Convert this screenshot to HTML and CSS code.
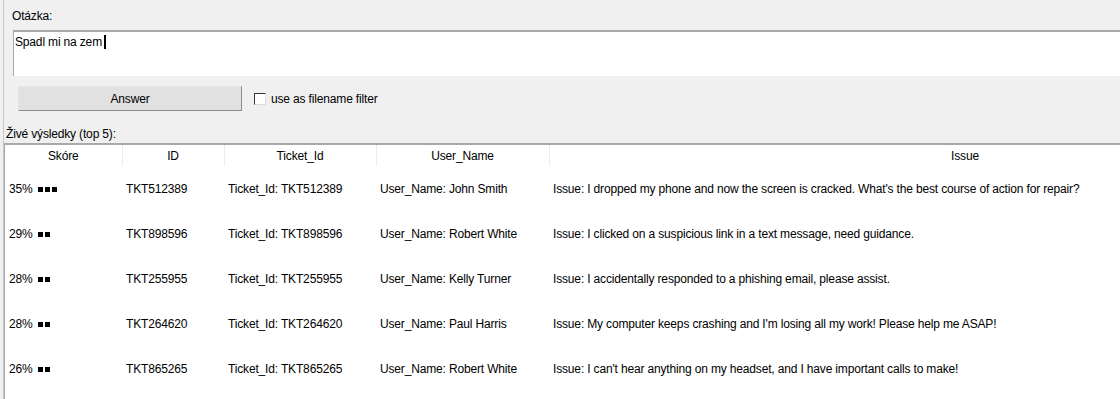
FILE: index.html
```html
<!DOCTYPE html>
<html lang="cs">
<head>
    <meta charset="UTF-8">
    <title>Otázka</title>
    <link rel="stylesheet" href="styles.css">
</head>
<body>
    <div class="frame">
        <div class="label question-label">Otázka:</div>
        <div class="query-box">
            <span class="query-text">Spadl mi na zem</span><span class="caret"></span>
        </div>

        <div class="actions">
            <button class="answer-btn">Answer</button>
            <label class="filter">
                <span class="check"></span>
                use as filename filter
            </label>
        </div>

        <div class="label results-label">Živé výsledky (top 5):</div>

        <div class="results">
            <table>
                <colgroup>
                    <col class="c-score">
                    <col class="c-id">
                    <col class="c-ticket">
                    <col class="c-user">
                    <col class="c-issue">
                </colgroup>
                <thead>
                    <tr>
                        <th>Skóre</th>
                        <th>ID</th>
                        <th>Ticket_Id</th>
                        <th>User_Name</th>
                        <th>Issue</th>
                    </tr>
                </thead>
                <tbody>
                    <tr>
                        <td>35% <span class="bar"><i></i><i></i><i></i></span></td>
                        <td>TKT512389</td>
                        <td>Ticket_Id: TKT512389</td>
                        <td>User_Name: John Smith</td>
                        <td>Issue: I dropped my phone and now the screen is cracked. What's the best course of action for repair?</td>
                    </tr>
                    <tr>
                        <td>29% <span class="bar"><i></i><i></i></span></td>
                        <td>TKT898596</td>
                        <td>Ticket_Id: TKT898596</td>
                        <td>User_Name: Robert White</td>
                        <td>Issue: I clicked on a suspicious link in a text message, need guidance.</td>
                    </tr>
                    <tr>
                        <td>28% <span class="bar"><i></i><i></i></span></td>
                        <td>TKT255955</td>
                        <td>Ticket_Id: TKT255955</td>
                        <td>User_Name: Kelly Turner</td>
                        <td>Issue: I accidentally responded to a phishing email, please assist.</td>
                    </tr>
                    <tr>
                        <td>28% <span class="bar"><i></i><i></i></span></td>
                        <td>TKT264620</td>
                        <td>Ticket_Id: TKT264620</td>
                        <td>User_Name: Paul Harris</td>
                        <td>Issue: My computer keeps crashing and I'm losing all my work! Please help me ASAP!</td>
                    </tr>
                    <tr>
                        <td>26% <span class="bar"><i></i><i></i></span></td>
                        <td>TKT865265</td>
                        <td>Ticket_Id: TKT865265</td>
                        <td>User_Name: Robert White</td>
                        <td>Issue: I can't hear anything on my headset, and I have important calls to make!</td>
                    </tr>
                </tbody>
            </table>
        </div>
    </div>
</body>
</html>
```

FILE: styles.css
```css
* {
    box-sizing: border-box;
}

html, body {
    margin: 0;
    height: 100%;
    overflow: hidden;
}

body {
    background: #f0f0f0;
    font-family: "Liberation Sans", Arial, sans-serif;
    font-size: 12px;
    letter-spacing: -0.16px;
    color: #000000;
}

.frame {
    margin-left: 3px;
    height: 399px;
    border-left: 1px solid #c8c8c8;
}

.label {
    line-height: 14px;
}

.question-label {
    padding: 9px 0 0 8px;
    height: 30px;
}

.query-box {
    margin-left: 9px;
    height: 46px;
    background: #ffffff;
    border-top: 2px solid #a9a9a9;
    border-left: 1px solid #a9a9a9;
    padding: 3px 0 0 1px;
    line-height: 14px;
}

.caret {
    display: inline-block;
    width: 2px;
    height: 14px;
    background: #000000;
    vertical-align: -3px;
    margin-left: 2px;
}

.actions {
    display: flex;
    align-items: flex-start;
    gap: 12px;
    padding: 10px 0 0 14px;
    height: 50px;
}

.answer-btn {
    width: 224px;
    height: 25px;
    background: #e1e1e1;
    border: 1px solid #e6e6e6;
    border-right: 1px solid #8c8c8c;
    border-bottom: 1px solid #8c8c8c;
    font-family: inherit;
    font-size: 12px;
    letter-spacing: inherit;
    color: #000000;
    padding: 0;
}

.filter {
    display: flex;
    align-items: center;
    gap: 5px;
    margin-top: 6px;
    line-height: 14px;
}

.check {
    width: 12px;
    height: 12px;
    background: #ffffff;
    border: 1px solid #333333;
    border-right-color: #dcdcdc;
    border-bottom-color: #dcdcdc;
}

.results-label {
    padding: 1px 0 0 2px;
    height: 17px;
}

.results {
    height: 256px;
    background: #ffffff;
    border-top: 2px solid #a9a9a9;
    border-left: 1px solid #a9a9a9;
    overflow: hidden;
}

table {
    border-collapse: collapse;
    table-layout: fixed;
    width: 1376px;
}

.c-score { width: 117px; }
.c-id { width: 102px; }
.c-ticket { width: 152px; }
.c-user { width: 173px; }
.c-issue { width: 832px; }

th {
    font-weight: normal;
    height: 21px;
    padding: 0;
    text-align: center;
    border-right: 1px solid #ececec;
    line-height: 14px;
}

td {
    height: 45px;
    padding: 0 0 0 4px;
    white-space: nowrap;
    line-height: 14px;
}

.bar {
    display: inline-flex;
    gap: 2px;
    margin-left: 2px;
    vertical-align: 1px;
}

.bar i {
    display: block;
    width: 5px;
    height: 5px;
    background: #000000;
}
```
